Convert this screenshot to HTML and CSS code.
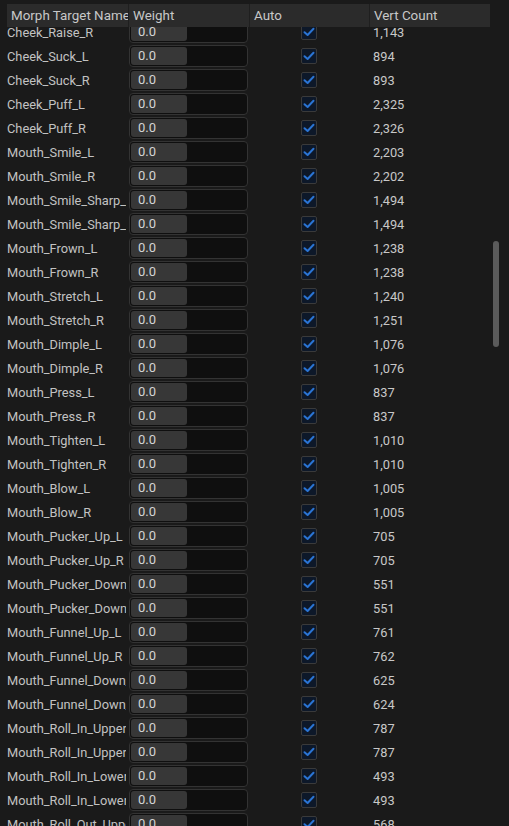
FILE: index.html
```html
<!DOCTYPE html>
<html lang="en">

<head>
    <meta charset="UTF-8">
    <meta name="viewport" content="width=device-width, initial-scale=1.0">
    <title>Morph Targets</title>
    <link rel="stylesheet" href="styles.css">
</head>

<body>

    <div class="panel">
        <div class="table">
            <div class="head">
                <div class="head_cell">Morph Target Name</div>
                <div class="head_cell">Weight</div>
                <div class="head_cell">Auto</div>
                <div class="head_cell">Vert Count</div>
            </div>

            <div class="rows" id="rows"></div>
        </div>

        <div class="scrollbar">
            <div class="thumb"></div>
        </div>
    </div>

    <script>
        // name, vert count
        const targets = [
            ["Cheek_Raise_R", "1,143"],
            ["Cheek_Suck_L", "894"],
            ["Cheek_Suck_R", "893"],
            ["Cheek_Puff_L", "2,325"],
            ["Cheek_Puff_R", "2,326"],
            ["Mouth_Smile_L", "2,203"],
            ["Mouth_Smile_R", "2,202"],
            ["Mouth_Smile_Sharp_L", "1,494"],
            ["Mouth_Smile_Sharp_R", "1,494"],
            ["Mouth_Frown_L", "1,238"],
            ["Mouth_Frown_R", "1,238"],
            ["Mouth_Stretch_L", "1,240"],
            ["Mouth_Stretch_R", "1,251"],
            ["Mouth_Dimple_L", "1,076"],
            ["Mouth_Dimple_R", "1,076"],
            ["Mouth_Press_L", "837"],
            ["Mouth_Press_R", "837"],
            ["Mouth_Tighten_L", "1,010"],
            ["Mouth_Tighten_R", "1,010"],
            ["Mouth_Blow_L", "1,005"],
            ["Mouth_Blow_R", "1,005"],
            ["Mouth_Pucker_Up_L", "705"],
            ["Mouth_Pucker_Up_R", "705"],
            ["Mouth_Pucker_Down_L", "551"],
            ["Mouth_Pucker_Down_R", "551"],
            ["Mouth_Funnel_Up_L", "761"],
            ["Mouth_Funnel_Up_R", "762"],
            ["Mouth_Funnel_Down_L", "625"],
            ["Mouth_Funnel_Down_R", "624"],
            ["Mouth_Roll_In_Upper_L", "787"],
            ["Mouth_Roll_In_Upper_R", "787"],
            ["Mouth_Roll_In_Lower_L", "493"],
            ["Mouth_Roll_In_Lower_R", "493"],
            ["Mouth_Roll_Out_Upper_L", "568"]
        ];

        const check = '<svg width="12" height="10" viewBox="0 0 12 10"><path d="M1.5 5.2 L4.6 8 L10.5 1.8" fill="none" stroke="#2a74d4" stroke-width="2" stroke-linecap="round" stroke-linejoin="round"/></svg>';

        const rows = document.getElementById("rows");
        rows.innerHTML = targets.map(t => `
            <div class="row">
                <div class="name">${t[0]}</div>
                <div class="weight"><div class="weight_box"><div class="weight_fill">0.0</div></div></div>
                <div class="auto"><div class="checkbox">${check}</div></div>
                <div class="count">${t[1]}</div>
            </div>`).join("");
    </script>

</body>

</html>
```

FILE: styles.css
```css
body {
    margin: 0;
    padding: 0;
    background-color: #1a1a1a;
    font-family: Roboto, "Liberation Sans", sans-serif;
    font-size: 12.8px;
    color: #c4c4c4;
    overflow: hidden;
}

.panel {
    display: flex;
    height: 826px;
    overflow: hidden;
    padding-left: 7px;
}

.table {
    width: 483px;
    display: flex;
    flex-direction: column;
    padding-top: 4px;
}

.head {
    display: grid;
    grid-template-columns: 121px 121px 120px 121px;
    height: 23px;
    background-color: #2b2b2b;
    margin-bottom: -7px;
    position: relative;
    z-index: 1;
    /* header sits over the first scrolled row */
}

.head_cell {
    line-height: 23px;
    padding-left: 4px;
    font-size: 13.4px;
    color: #c8c8c8;
    white-space: nowrap;
    overflow: hidden;
    border-left: 1px solid #1f1f1f;
}

.head_cell:first-child {
    border-left: none;
}

.rows {
    display: flex;
    flex-direction: column;
}

.row {
    display: grid;
    grid-template-columns: 121px 121px 120px 121px;
    height: 24px;
    align-items: center;
}

.name {
    white-space: nowrap;
    overflow: hidden;
    margin-right: 2px;
    color: #c2c2c2;
}

.weight {
    padding-left: 1px;
}

.weight_box {
    width: 116px;
    height: 20px;
    border: 1px solid #333333;
    border-radius: 4px;
    background-color: #0f0f0f;
    display: flex;
    align-items: center;
    padding-left: 1px;
}

.weight_fill {
    width: 49px;
    height: 18px;
    line-height: 18px;
    padding-left: 7px;
    border-radius: 3px;
    background-color: #373737;
    font-size: 13px;
    color: #d4d4d4;
}

.auto {
    display: flex;
    justify-content: center;
}

.checkbox {
    width: 14px;
    height: 14px;
    border: 1px solid #3a3a3a;
    border-radius: 2px;
    background-color: #0d1829;
    display: flex;
    justify-content: center;
    align-items: center;
}

.count {
    padding-left: 4px;
    color: #c8c8c8;
}

.scrollbar {
    width: 12px;
    padding-top: 241px;
    padding-left: 3px;
}

.thumb {
    width: 6px;
    height: 106px;
    border-radius: 3px;
    background-color: #5b5b5b;
}
```
